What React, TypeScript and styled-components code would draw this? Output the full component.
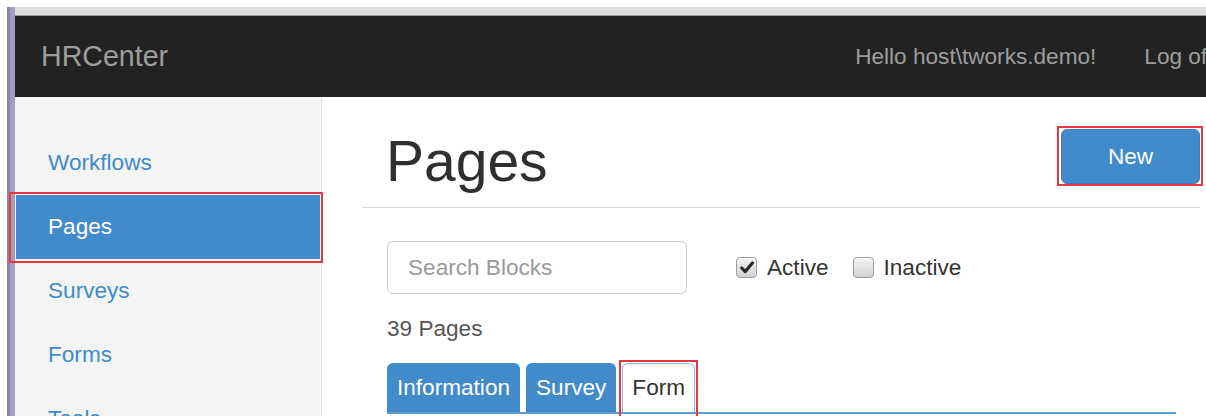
import React, { useState } from 'react';
import styled, { createGlobalStyle } from 'styled-components';

const GlobalStyle = createGlobalStyle`
  html, body {
    margin: 0;
    padding: 0;
    background: #fff;
    overflow: hidden;
  }

  body {
    font-family: "Liberation Sans", Arial, sans-serif;
    color: #333;
  }
`;

const BLUE = '#428bca';
const MARK = '#e8363c';
const TEXT = '22.6px';

// red review frame drawn around a highlighted control
const markFrame = (l: number, r: number, t: number, b: number) => `
  &::after {
    content: '';
    position: absolute;
    left: ${l}px;
    right: ${r}px;
    top: ${t}px;
    bottom: ${b}px;
    border: 2px solid ${MARK};
    pointer-events: none;
  }
`;

const Page = styled.div`
  width: 1263px;
  height: 416px;
  padding: 7px 0 0 7px;
  box-sizing: border-box;
  overflow: hidden;
`;

const Frame = styled.div`
  display: flex;
  flex-direction: column;
  height: 100%;
  padding-left: 8px;
  background: linear-gradient(to right, #8a86aa 0 3px, #a29ec2 3px 8px, #fff 8px);
`;

const TopBand = styled.div`
  height: 8px;
  background: #dedede;
  border-bottom: 1px solid #9a9a9a;
`;

const Navbar = styled.header`
  display: flex;
  align-items: center;
  height: 81px;
  padding: 0 26px;
  background: #222;
  color: #9d9d9d;
  flex-shrink: 0;
`;

const Brand = styled.span`
  font-size: 28.6px;
  line-height: 1;
`;

const NavLinks = styled.nav`
  display: flex;
  margin-left: auto;
`;

const NavLink = styled.span`
  padding: 0 24px;
  font-size: ${TEXT};
`;

const Body = styled.div`
  display: flex;
  flex: 1;
  min-height: 0;
`;

const Sidebar = styled.aside`
  width: 307px;
  padding-top: 34px;
  background: #f4f4f4;
  border-right: 1px solid #e6e6e6;
  box-sizing: border-box;
  flex-shrink: 0;
`;

const SideItem = styled.div<{ $active?: boolean; $marked?: boolean }>`
  position: relative;
  height: 64px;
  margin: 0 1px;
  padding-left: 32px;
  display: flex;
  align-items: center;
  font-size: ${TEXT};
  color: ${(p) => (p.$active ? '#fff' : BLUE)};
  background: ${(p) => (p.$active ? BLUE : 'transparent')};

  ${(p) => p.$marked && markFrame(-7, -3, -3, -4)}
`;

const Main = styled.main`
  flex: 1;
  padding: 32px 63px 0 40px;
  background: #fff;
`;

const Header = styled.div`
  display: flex;
  justify-content: space-between;
  align-items: flex-start;
  height: 78px;
  border-bottom: 1px solid #d8d8d8;
`;

const Title = styled.h1`
  margin: 1px 0 0 24px;
  font-size: 57px;
  font-weight: normal;
  line-height: 62px;
  color: #2f2f2f;
`;

const PrimaryButton = styled.button<{ $marked?: boolean }>`
  position: relative;
  width: 139px;
  height: 55px;
  border: 1px solid #3a7fbc;
  border-radius: 6px;
  background: ${BLUE};
  color: #fff;
  font-family: inherit;
  font-size: ${TEXT};

  ${(p) => p.$marked && markFrame(-5, -4, -4, -3)}
`;

const Content = styled.div`
  padding: 33px 24px 0 25px;
`;

const FilterRow = styled.div`
  display: flex;
  align-items: center;
`;

const Search = styled.input`
  width: 300px;
  height: 53px;
  padding: 0 20px;
  box-sizing: border-box;
  border: 1px solid #ccc;
  border-radius: 6px;
  font-family: inherit;
  font-size: ${TEXT};
  color: #555;

  &::placeholder {
    color: #9a9a9a;
  }
`;

const Checks = styled.div`
  display: flex;
  align-items: center;
  gap: 24px;
  margin-left: 49px;
`;

const CheckLabel = styled.label`
  display: flex;
  align-items: center;
  gap: 10px;
  font-size: ${TEXT};
  color: #333;
  cursor: pointer;
`;

const Box = styled.span`
  display: inline-flex;
  align-items: center;
  justify-content: center;
  width: 21px;
  height: 21px;
  box-sizing: border-box;
  border: 1px solid #9c9c9c;
  border-radius: 4px;
  background: linear-gradient(#f4f4f4, #d2d2d2);
  box-shadow: inset 0 1px 0 #fff;
`;

const Count = styled.div`
  margin-top: 19px;
  font-size: ${TEXT};
  line-height: 31px;
  color: #555;
`;

const Tabs = styled.div`
  display: flex;
  gap: 6px;
  margin-top: 19px;
  border-bottom: 2px solid #5d9bd3;
`;

const Tab = styled.div<{ $selected?: boolean; $marked?: boolean }>`
  position: relative;
  height: 49px;
  padding: 0 9px;
  display: flex;
  align-items: center;
  box-sizing: border-box;
  border-radius: 6px 6px 0 0;
  font-size: ${TEXT};
  background: ${(p) => (p.$selected ? '#fff' : BLUE)};
  color: ${(p) => (p.$selected ? '#333' : '#fff')};
  border: 1px solid ${(p) => (p.$selected ? '#8cb8e2' : BLUE)};
  border-bottom: none;

  ${(p) => p.$marked && markFrame(-4, -4, -4, -6)}
`;

function CheckBox ({ checked }: { checked: boolean }) {
  return (
    <Box>
      {checked && (
        <svg width='14' height='13' viewBox='0 0 14 13'>
          <path d='M1.8 7 L5.2 10.6 L12.4 2' fill='none' stroke='#2b2b2b' strokeWidth='3.2' strokeLinecap='round' strokeLinejoin='round' />
        </svg>
      )}
    </Box>
  );
}

const menu = ['Workflows', 'Pages', 'Surveys', 'Forms', 'Tools'];
const tabs = ['Information', 'Survey', 'Form'];

export default function App () {
  const [active, setActive] = useState(true);
  const [inactive, setInactive] = useState(false);

  return (
    <Page>
      <GlobalStyle />
      <Frame>
        <TopBand />
        <Navbar>
          <Brand>HRCenter</Brand>
          <NavLinks>
            <NavLink>Hello host\tworks.demo!</NavLink>
            <NavLink>Log off</NavLink>
          </NavLinks>
        </Navbar>
        <Body>
          <Sidebar>
            {menu.map((item) => (
              <SideItem key={item} $active={item === 'Pages'} $marked={item === 'Pages'}>
                {item}
              </SideItem>
            ))}
          </Sidebar>
          <Main>
            <Header>
              <Title>Pages</Title>
              <PrimaryButton $marked>New</PrimaryButton>
            </Header>
            <Content>
              <FilterRow>
                <Search placeholder='Search Blocks' />
                <Checks>
                  <CheckLabel onClick={() => setActive(!active)}>
                    <CheckBox checked={active} />
                    Active
                  </CheckLabel>
                  <CheckLabel onClick={() => setInactive(!inactive)}>
                    <CheckBox checked={inactive} />
                    Inactive
                  </CheckLabel>
                </Checks>
              </FilterRow>
              <Count>39 Pages</Count>
              <Tabs>
                {tabs.map((t) => (
                  <Tab key={t} $selected={t === 'Form'} $marked={t === 'Form'}>
                    {t}
                  </Tab>
                ))}
              </Tabs>
            </Content>
          </Main>
        </Body>
      </Frame>
    </Page>
  );
}
